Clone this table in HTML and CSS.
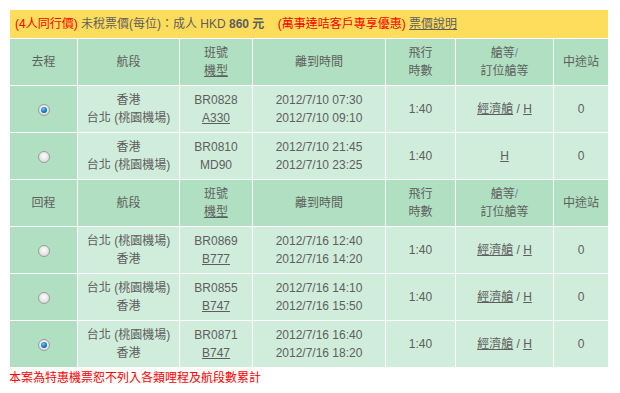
FILE: index.html
```html
<!DOCTYPE html>
<html lang="zh-Hant">
<head>
    <meta charset="UTF-8">
    <title>航班選擇</title>
    <link rel="stylesheet" href="styles.css">
</head>
<body>
    <div class="fare-box">
        <div class="fare-bar">
            <span class="red">(4人同行價)</span> 未稅票價(每位)：成人 HKD <b>860 元</b>
            <span class="red promo">(萬事達咭客戶專享優惠)</span> <a href="#">票價說明</a>
        </div>
        <table class="flights">
            <colgroup>
                <col style="width:67px"><col style="width:101px"><col style="width:72px">
                <col style="width:132px"><col style="width:69px"><col style="width:97px"><col style="width:54px">
            </colgroup>
            <tr class="head">
                <td>去程</td>
                <td>航段</td>
                <td>班號<br><u>機型</u></td>
                <td>離到時間</td>
                <td>飛行<br>時數</td>
                <td>艙等<span class="slash">/</span><br>訂位艙等</td>
                <td>中途站</td>
            </tr>
            <tr>
                <td class="pick"><span class="radio on"></span></td>
                <td>香港<br>台北 (桃園機場)</td>
                <td>BR0828<br><a href="#">A330</a></td>
                <td>2012/7/10 07:30<br>2012/7/10 09:10</td>
                <td>1:40</td>
                <td><a href="#">經濟艙</a> / <a href="#">H</a></td>
                <td>0</td>
            </tr>
            <tr>
                <td class="pick"><span class="radio"></span></td>
                <td>香港<br>台北 (桃園機場)</td>
                <td>BR0810<br>MD90</td>
                <td>2012/7/10 21:45<br>2012/7/10 23:25</td>
                <td>1:40</td>
                <td><a href="#">H</a></td>
                <td>0</td>
            </tr>
            <tr class="head">
                <td>回程</td>
                <td>航段</td>
                <td>班號<br><u>機型</u></td>
                <td>離到時間</td>
                <td>飛行<br>時數</td>
                <td>艙等<span class="slash">/</span><br>訂位艙等</td>
                <td>中途站</td>
            </tr>
            <tr>
                <td class="pick"><span class="radio"></span></td>
                <td>台北 (桃園機場)<br>香港</td>
                <td>BR0869<br><a href="#">B777</a></td>
                <td>2012/7/16 12:40<br>2012/7/16 14:20</td>
                <td>1:40</td>
                <td><a href="#">經濟艙</a> / <a href="#">H</a></td>
                <td>0</td>
            </tr>
            <tr>
                <td class="pick"><span class="radio"></span></td>
                <td>台北 (桃園機場)<br>香港</td>
                <td>BR0855<br><a href="#">B747</a></td>
                <td>2012/7/16 14:10<br>2012/7/16 15:50</td>
                <td>1:40</td>
                <td><a href="#">經濟艙</a> / <a href="#">H</a></td>
                <td>0</td>
            </tr>
            <tr>
                <td class="pick"><span class="radio on"></span></td>
                <td>台北 (桃園機場)<br>香港</td>
                <td>BR0871<br><a href="#">B747</a></td>
                <td>2012/7/16 16:40<br>2012/7/16 18:20</td>
                <td>1:40</td>
                <td><a href="#">經濟艙</a> / <a href="#">H</a></td>
                <td>0</td>
            </tr>
        </table>
        <p class="note">本案為特惠機票恕不列入各類哩程及航段數累計</p>
    </div>
</body>
</html>
```

FILE: styles.css
```css
:root {
    --yellow: #ffdd5c;
    --head-green: #b0e0c1;
    --row-green: #d0eddb;
    --text: #5e5e5e;
    --red: #ff0000;
}
body {
    margin: 10px;
    font-family: 'Liberation Sans', 'Noto Sans CJK TC', sans-serif;
    font-size: 12px;
    color: var(--text);
    background: #fff;
}
.fare-box {
    width: 598px;
}
.fare-bar {
    background: var(--yellow);
    height: 28px;
    line-height: 28px;
    padding-left: 5px;
    font-size: 12px;
    white-space: nowrap;
}
.fare-bar b {
    font-weight: bold;
}
.red {
    color: var(--red);
}
.promo {
    margin-left: 10px;
}
a {
    color: var(--text);
    text-decoration: underline;
}
.flights {
    border-collapse: separate;
    border-spacing: 1px;
    margin: 0 -1px;
    width: 600px;
    table-layout: fixed;
}
.flights td {
    height: 46px;
    padding: 0;
    text-align: center;
    vertical-align: middle;
    line-height: 18px;
    background: var(--row-green);
}
.flights .head td,
.flights td.pick {
    background: var(--head-green);
}
.slash {
    color: #7488b4;
}
.radio {
    display: inline-block;
    width: 10px;
    height: 10px;
    border: 1px solid #9a9a9a;
    border-radius: 50%;
    background: radial-gradient(circle at 50% 40%, #fdfdfd 0, #e4e4e4 60%, #cfcfcf 100%);
    vertical-align: middle;
    position: relative;
}
.radio.on::after {
    content: '';
    position: absolute;
    left: 2px;
    top: 2px;
    width: 6px;
    height: 6px;
    border-radius: 50%;
    background: radial-gradient(circle at 40% 35%, #6cc8ff 0, #1a7fc6 50%, #0b3d6e 100%);
}
.note {
    margin: 2px 0 0 -1px;
    color: var(--red);
    line-height: 16px;
}
```
